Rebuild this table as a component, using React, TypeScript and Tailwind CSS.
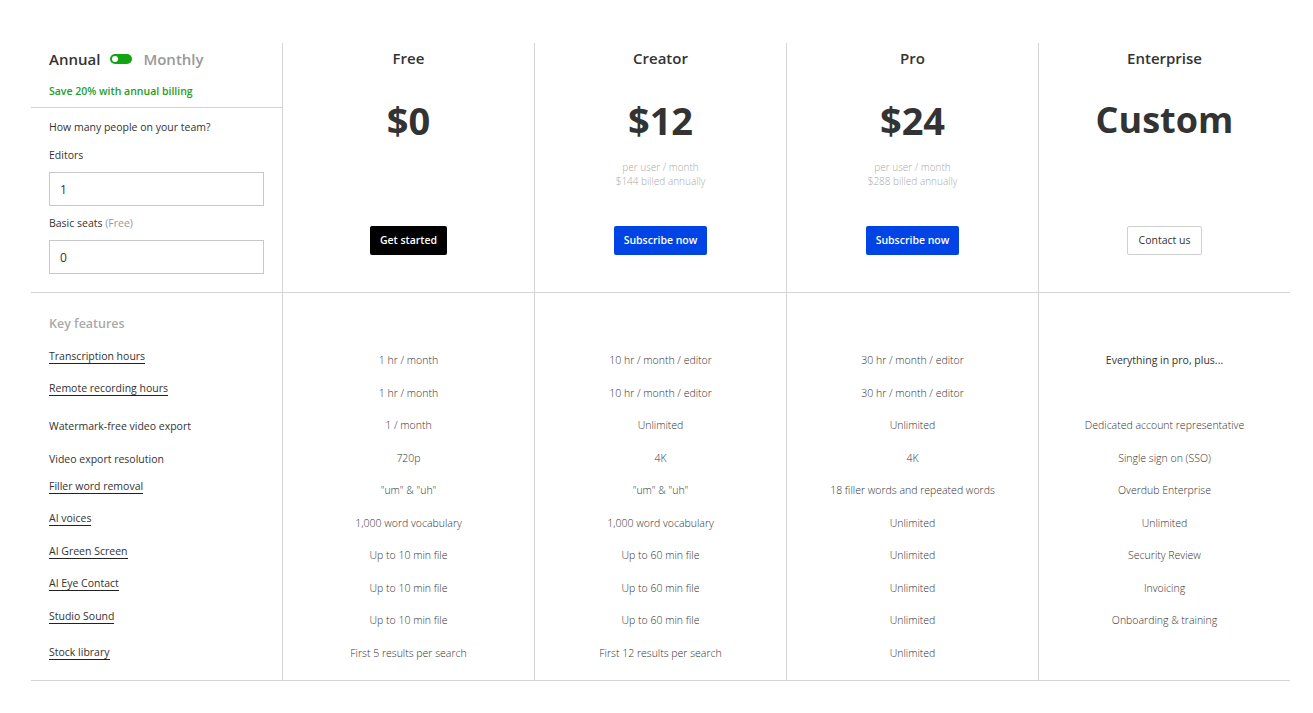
import React from 'react';

// ── Plan data ────────────────────────────────────────────────────────────────
type Plan = {
  name: string;
  price: string;
  sub?: [string, string];
  cta: string;
  variant: 'dark' | 'blue' | 'outline';
  values: string[];
  firstBold?: boolean;
};

const features = [
  { label: 'Transcription hours', link: true },
  { label: 'Remote recording hours', link: true },
  { label: 'Watermark-free video export', link: false },
  { label: 'Video export resolution', link: false },
  { label: 'Filler word removal ', link: true },
  { label: 'AI voices', link: true },
  { label: 'AI Green Screen', link: true },
  { label: 'AI Eye Contact', link: true },
  { label: 'Studio Sound', link: true },
  { label: 'Stock library', link: true, last: true },
];

const plans: Plan[] = [
  {
    name: 'Free',
    price: '$0',
    cta: 'Get started',
    variant: 'dark',
    values: ['1 hr / month', '1 hr / month', '1 / month', '720p', '"um" & "uh"', '1,000 word vocabulary', 'Up to 10 min file', 'Up to 10 min file', 'Up to 10 min file', 'First 5 results per search'],
  },
  {
    name: 'Creator',
    price: '$12',
    sub: ['per user / month', '$144 billed annually'],
    cta: 'Subscribe now',
    variant: 'blue',
    values: ['10 hr / month / editor', '10 hr / month / editor', 'Unlimited', '4K', '"um" & "uh"', '1,000 word vocabulary', 'Up to 60 min file', 'Up to 60 min file', 'Up to 60 min file', 'First 12 results per search'],
  },
  {
    name: 'Pro',
    price: '$24',
    sub: ['per user / month', '$288 billed annually'],
    cta: 'Subscribe now',
    variant: 'blue',
    values: ['30 hr / month / editor', '30 hr / month / editor', 'Unlimited', '4K', '18 filler words and repeated words', 'Unlimited', 'Unlimited', 'Unlimited', 'Unlimited', 'Unlimited'],
  },
  {
    name: 'Enterprise',
    price: 'Custom',
    cta: 'Contact us',
    variant: 'outline',
    firstBold: true,
    values: ['Everything in pro, plus...', '', 'Dedicated account representative', 'Single sign on (SSO)', 'Overdub Enterprise', 'Unlimited', 'Security Review', 'Invoicing', 'Onboarding & training', ''],
  },
];

const btnStyles = {
  dark: 'bg-black text-white font-semibold px-[10px]',
  blue: 'bg-[#0044e6] text-white font-semibold px-[10px]',
  outline: 'bg-white text-[#333] border border-[#cfcfcf] px-[11px]',
};

const cols = 'grid grid-cols-[251px_repeat(4,252px)]';

// ── Plan header cell ─────────────────────────────────────────────────────────
const PlanHeader: React.FC<{ plan: Plan }> = ({ plan }) => (
  <div className="flex flex-col items-center border-l border-[#d4d4d4] pt-[5px]">
    <div className="text-[15px] leading-[20px] font-semibold text-[#333]">{plan.name}</div>
    <div
      className={`mt-[28px] leading-[48px] font-bold text-[#333] ${plan.price === 'Custom' ? 'text-[36px]' : 'text-[38px]'}`}
    >
      {plan.price}
    </div>
    <div className="mt-[16px] h-[28px] flex flex-col items-center text-[10px] leading-[14px] font-light text-[#aaa]">
      {plan.sub && (
        <>
          <span>{plan.sub[0]}</span>
          <span>{plan.sub[1]}</span>
        </>
      )}
    </div>
    <button className={`mt-[38px] h-[29px] rounded-[2px] text-[10.5px] ${btnStyles[plan.variant]}`}>
      {plan.cta}
    </button>
  </div>
);

// ── Page ─────────────────────────────────────────────────────────────────────
export default function App() {
  return (
    <div className="min-h-screen bg-white text-[#333]" style={{ fontFamily: '"Open Sans", "Noto Sans", sans-serif' }}>
      <div className="pl-[31px] pt-[43px] w-[1290px]">
        {/* ── Top: billing + plan headers ── */}
        <div className={`${cols} h-[250px] border-b border-[#d4d4d4]`}>
          <div className="flex flex-col">
            <div className="h-[65px] border-b border-[#d4d4d4] px-[18px] pt-[6px]">
              <div className="flex items-center h-[20px]">
                <span className="text-[15px] font-semibold text-[#333]">Annual</span>
                <span className="ml-[10px] w-[22px] h-[10px] rounded-full bg-[#13a313] flex items-center pl-[2px]">
                  <span className="w-[6px] h-[6px] rounded-full bg-white" />
                </span>
                <span className="ml-[11px] text-[15px] font-semibold text-[#999]">Monthly</span>
              </div>
              <div className="mt-[14px] text-[10.5px] leading-[16px] font-semibold text-[#1f9d1f]">
                Save 20% with annual billing
              </div>
            </div>
            <div className="px-[18px] pt-[11px] text-[10.5px] leading-[16px]">
              <div>How many people on your team?</div>
              <div className="mt-[12px]">Editors</div>
              <input
                readOnly
                value="1"
                className="mt-[9px] block w-[215px] h-[34px] border border-[#c8c8c8] px-[10px] text-[12px] outline-none"
              />
              <div className="mt-[9px]">
                Basic seats <span className="text-[#999]">(Free)</span>
              </div>
              <input
                readOnly
                value="0"
                className="mt-[9px] block w-[215px] h-[34px] border border-[#c8c8c8] px-[10px] text-[12px] outline-none"
              />
            </div>
          </div>
          {plans.map(p => (
            <PlanHeader key={p.name} plan={p} />
          ))}
        </div>

        {/* ── Features ── */}
        <div className="border-b border-[#d4d4d4]">
          <div className={`${cols} h-[52px]`}>
            <div className="px-[18px] pt-[22px] text-[12.5px] leading-[18px] font-semibold text-[#aaa]">Key features</div>
            {plans.map(p => (
              <div key={p.name} className="border-l border-[#d4d4d4]" />
            ))}
          </div>
          {features.map((f, i) => (
            <div key={f.label} className={`${cols} h-[32.5px]`}>
              <div className="flex items-center px-[18px]">
                <span
                  className={
                    f.link
                      ? `text-[10.5px] leading-[14px] border-b border-[#222] ${f.last ? 'mb-[2px]' : 'mb-[10px]'}`
                      : 'text-[10.5px] leading-[14px]'
                  }
                >
                  {f.label}
                </span>
              </div>
              {plans.map(p => (
                <div
                  key={p.name}
                  className={`flex items-center justify-center border-l border-[#d4d4d4] text-[10.5px] ${
                    p.firstBold && i === 0 ? 'font-normal text-[#333]' : 'font-light text-[#333]'
                  }`}
                >
                  {p.values[i]}
                </div>
              ))}
            </div>
          ))}
          <div className={`${cols} h-[10px]`}>
            <div />
            {plans.map(p => (
              <div key={p.name} className="border-l border-[#d4d4d4]" />
            ))}
          </div>
        </div>
      </div>
    </div>
  );
}
